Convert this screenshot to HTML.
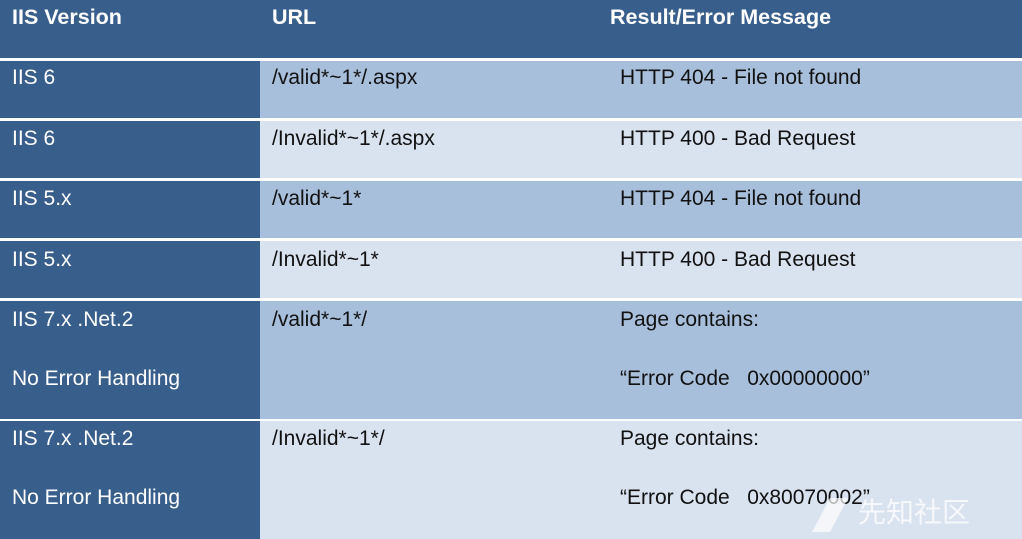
<!DOCTYPE html>
<html><head><style>
body{margin:0;width:1022px;height:539px;background:#fff;position:relative;overflow:hidden;font-family:"Liberation Sans","Noto Sans CJK SC",sans-serif;}
.r{position:absolute;left:0;width:1022px;}
.d{position:absolute;left:0;width:260px;top:0;bottom:0;background:#385e8b;}
.l{position:absolute;left:260px;right:0;top:0;bottom:0;}
.t{position:absolute;font-size:21px;line-height:24px;color:#111;white-space:nowrap;}
.w{color:#fff;}
.h{font-weight:bold;color:#fff;font-size:21.5px;}
</style></head><body>
<div class="r" style="top:0;height:58px;background:#385e8b"></div>
<div class="t h" style="left:12px;top:5px">IIS Version</div>
<div class="t h" style="left:272px;top:5px">URL</div>
<div class="t h" style="left:610px;top:5px">Result/Error Message</div>

<div class="r" style="top:61px;height:57px"><div class="d"></div><div class="l" style="background:#a8bfdc"></div></div>
<div class="r" style="top:121px;height:57px"><div class="d"></div><div class="l" style="background:#d9e2ef"></div></div>
<div class="r" style="top:181px;height:57px"><div class="d"></div><div class="l" style="background:#a8bfdc"></div></div>
<div class="r" style="top:241px;height:57px"><div class="d"></div><div class="l" style="background:#d9e2ef"></div></div>
<div class="r" style="top:301px;height:118px"><div class="d"></div><div class="l" style="background:#a8bfdc"></div></div>
<div class="r" style="top:421px;height:118px"><div class="d"></div><div class="l" style="background:#d9e2ef"></div></div>

<div class="t w" style="left:12px;top:66px">IIS 6</div>
<div class="t" style="left:272px;top:66px">/valid*~1*/.aspx</div>
<div class="t" style="left:620px;top:66px">HTTP 404 - File not found</div>

<div class="t w" style="left:12px;top:127px">IIS 6</div>
<div class="t" style="left:272px;top:127px">/Invalid*~1*/.aspx</div>
<div class="t" style="left:620px;top:127px">HTTP 400 - Bad Request</div>

<div class="t w" style="left:12px;top:187px">IIS 5.x</div>
<div class="t" style="left:272px;top:187px">/valid*~1*</div>
<div class="t" style="left:620px;top:187px">HTTP 404 - File not found</div>

<div class="t w" style="left:12px;top:248px">IIS 5.x</div>
<div class="t" style="left:272px;top:248px">/Invalid*~1*</div>
<div class="t" style="left:620px;top:248px">HTTP 400 - Bad Request</div>

<div class="t w" style="left:12px;top:308px">IIS 7.x .Net.2</div>
<div class="t w" style="left:12px;top:367px">No Error Handling</div>
<div class="t" style="left:272px;top:308px">/valid*~1*/</div>
<div class="t" style="left:620px;top:308px">Page contains:</div>
<div class="t" style="left:620px;top:367px">“Error Code&nbsp;&nbsp; 0x00000000”</div>

<div class="t w" style="left:12px;top:427px">IIS 7.x .Net.2</div>
<div class="t w" style="left:12px;top:486px">No Error Handling</div>
<div class="t" style="left:272px;top:427px">/Invalid*~1*/</div>
<div class="t" style="left:620px;top:427px">Page contains:</div>
<div class="t" style="left:620px;top:486px">“Error Code&nbsp;&nbsp; 0x80070002”</div>

<div class="t" style="left:858px;top:496px;font-size:28px;line-height:34px;color:rgba(255,255,255,0.75)">先知社区</div>
<svg style="position:absolute;left:808px;top:494px" width="42" height="40"><polygon points="4,38 22,4 40,4 22,38" fill="rgba(255,255,255,0.7)"/></svg>
</body></html>
